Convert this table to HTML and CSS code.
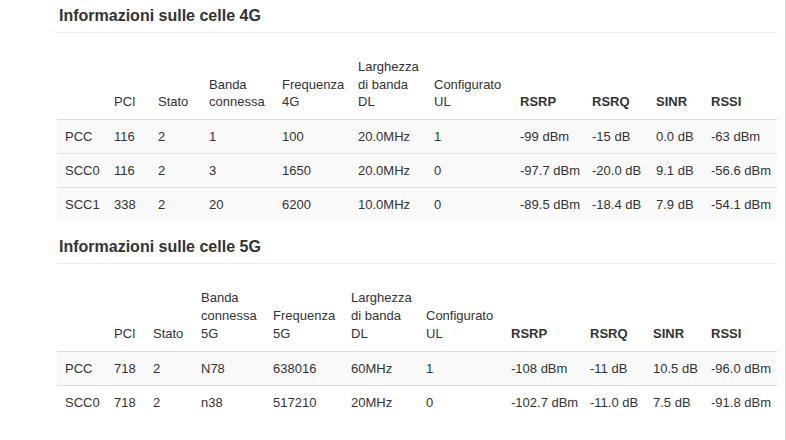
FILE: index.html
```html
<!DOCTYPE html>
<html lang="it">
<head>
<meta charset="utf-8">
<title>Informazioni sulle celle</title>
<link rel="stylesheet" href="styles.css">
</head>
<body>
<div class="page">
  <section class="section">
    <h4 class="section-title">Informazioni sulle celle 4G</h4>
    <table class="cells cells-4g">
      <thead>
        <tr>
          <th></th>
          <th>PCI</th>
          <th>Stato</th>
          <th>Banda connessa</th>
          <th>Frequenza 4G</th>
          <th>Larghezza di banda DL</th>
          <th>Configurato UL</th>
          <th class="metric">RSRP</th>
          <th class="metric">RSRQ</th>
          <th class="metric">SINR</th>
          <th class="metric">RSSI</th>
        </tr>
      </thead>
      <tbody>
        <tr class="shaded">
          <td>PCC</td><td>116</td><td>2</td><td>1</td><td>100</td><td>20.0MHz</td><td>1</td><td>-99 dBm</td><td>-15 dB</td><td>0.0 dB</td><td>-63 dBm</td>
        </tr>
        <tr class="shaded">
          <td>SCC0</td><td>116</td><td>2</td><td>3</td><td>1650</td><td>20.0MHz</td><td>0</td><td>-97.7 dBm</td><td>-20.0 dB</td><td>9.1 dB</td><td>-56.6 dBm</td>
        </tr>
        <tr class="shaded">
          <td>SCC1</td><td>338</td><td>2</td><td>20</td><td>6200</td><td>10.0MHz</td><td>0</td><td>-89.5 dBm</td><td>-18.4 dB</td><td>7.9 dB</td><td>-54.1 dBm</td>
        </tr>
      </tbody>
    </table>
  </section>

  <section class="section section-next">
    <h4 class="section-title">Informazioni sulle celle 5G</h4>
    <table class="cells cells-5g">
      <thead>
        <tr>
          <th></th>
          <th>PCI</th>
          <th>Stato</th>
          <th>Banda connessa 5G</th>
          <th>Frequenza 5G</th>
          <th>Larghezza di banda DL</th>
          <th>Configurato UL</th>
          <th class="metric">RSRP</th>
          <th class="metric">RSRQ</th>
          <th class="metric">SINR</th>
          <th class="metric">RSSI</th>
        </tr>
      </thead>
      <tbody>
        <tr class="shaded">
          <td>PCC</td><td>718</td><td>2</td><td>N78</td><td>638016</td><td>60MHz</td><td>1</td><td>-108 dBm</td><td>-11 dB</td><td>10.5 dB</td><td>-96.0 dBm</td>
        </tr>
        <tr>
          <td>SCC0</td><td>718</td><td>2</td><td>n38</td><td>517210</td><td>20MHz</td><td>0</td><td>-102.7 dBm</td><td>-11.0 dB</td><td>7.5 dB</td><td>-91.8 dBm</td>
        </tr>
      </tbody>
    </table>
  </section>
</div>
</body>
</html>
```

FILE: styles.css
```css
html, body {
  margin: 0;
  padding: 0;
  background: #ffffff;
}

body {
  font-family: "Liberation Sans", Arial, sans-serif;
  font-size: 13px;
  color: #333333;
}

.page {
  width: 785px;
  min-height: 440px;
  border-right: 1px solid #d4d4d4;
}

.section {
  margin-left: 57px;
  width: 720px;
}

.section-next {
  margin-top: 10px;
}

.section-title {
  margin: 0;
  padding: 6px 0 6px 2px;
  font-size: 16px;
  line-height: 20px;
  font-weight: bold;
  color: #333333;
  border-bottom: 1px solid #eeeeee;
}

.cells {
  width: 720px;
  margin-top: 17px;
  border-collapse: collapse;
  table-layout: fixed;
}

.cells th,
.cells td {
  box-sizing: border-box;
}

.cells th {
  text-align: left;
  vertical-align: bottom;
  font-weight: normal;
  line-height: 17.5px;
  padding: 8px 7px 8px 8px;
  border-bottom: 1px solid #dddddd;
}

.cells-5g th {
  line-height: 18px;
}

.cells th.metric {
  font-weight: bold;
}

.cells td {
  padding: 8px 2px 8px 8px;
  line-height: 17px;
  white-space: nowrap;
  border-top: 1px solid #dddddd;
}

.cells tr.shaded td {
  background: #f9f9f9;
}

/* 4G column widths */
.cells-4g th:nth-child(1) { width: 49px; }
.cells-4g th:nth-child(2) { width: 44px; }
.cells-4g th:nth-child(3) { width: 51px; }
.cells-4g th:nth-child(4) { width: 73px; }
.cells-4g th:nth-child(5) { width: 76px; }
.cells-4g th:nth-child(6) { width: 76px; }
.cells-4g th:nth-child(7) { width: 86px; }
.cells-4g th:nth-child(8) { width: 72px; }
.cells-4g th:nth-child(9) { width: 64px; }
.cells-4g th:nth-child(10) { width: 55px; }
.cells-4g th:nth-child(11) { width: 74px; }

/* 5G column widths */
.cells-5g th:nth-child(1) { width: 49px; }
.cells-5g th:nth-child(2) { width: 39px; }
.cells-5g th:nth-child(3) { width: 48px; }
.cells-5g th:nth-child(4) { width: 72px; }
.cells-5g th:nth-child(5) { width: 78px; }
.cells-5g th:nth-child(6) { width: 75px; }
.cells-5g th:nth-child(7) { width: 85px; }
.cells-5g th:nth-child(8) { width: 79px; }
.cells-5g th:nth-child(9) { width: 63px; }
.cells-5g th:nth-child(10) { width: 58px; }
.cells-5g th:nth-child(11) { width: 74px; }
```
